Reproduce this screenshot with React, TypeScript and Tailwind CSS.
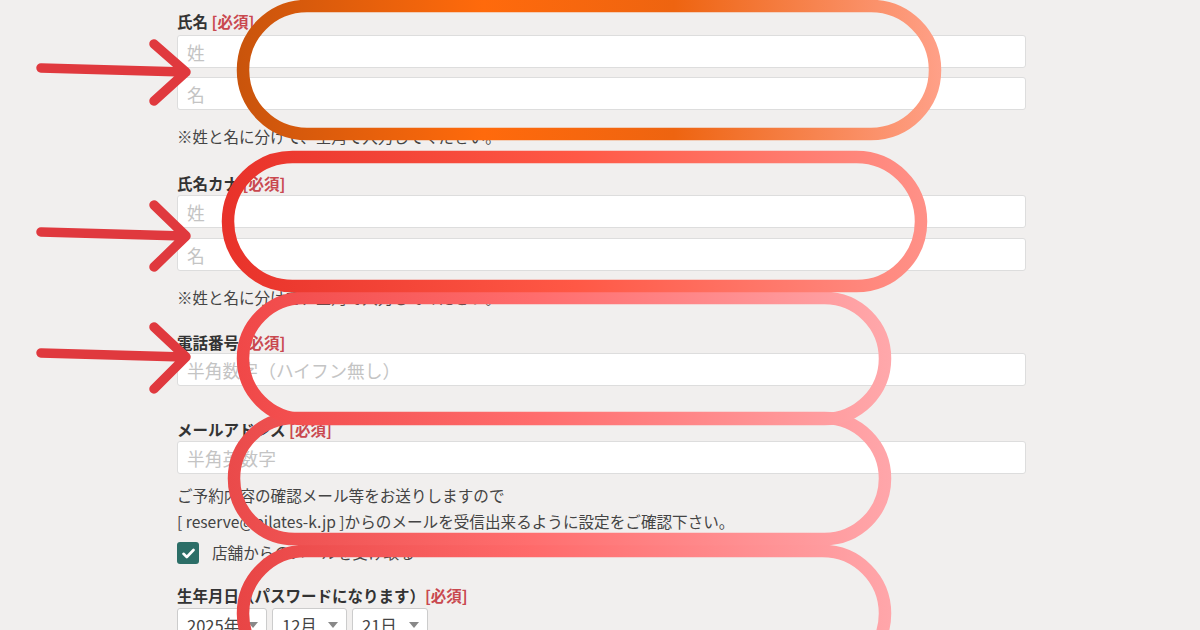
import React from "react";

const FONT = { fontFamily: '"Noto Sans CJK JP", "Noto Sans", sans-serif' };

function Label({ text, className = "" }: { text: string; className?: string }) {
  return (
    <div className={`text-[15.5px] leading-[22px] font-bold text-[#333333] ${className}`}>
      {text} <span className="text-[#c9484f]">[必須]</span>
    </div>
  );
}

function Field({ placeholder, className = "" }: { placeholder: string; className?: string }) {
  return (
    <input
      readOnly
      placeholder={placeholder}
      className={`block w-full h-[33px] bg-white border border-[#dddddd] rounded-[3px] px-[9px] text-[17.8px] placeholder:text-[#c4c4c4] outline-none ${className}`}
    />
  );
}

function Select({ value, width }: { value: string; width: string }) {
  return (
    <div className={`${width} h-[34px] bg-white border border-[#cccccc] rounded-[3px] flex items-center justify-between pl-[9px] pr-[8px] text-[16.5px] text-[#444444]`}>
      <span>{value}</span>
      <span className="w-0 h-0 border-l-[5px] border-r-[5px] border-t-[6px] border-l-transparent border-r-transparent border-t-[#888888]" />
    </div>
  );
}

type Oval = { x: number; y: number; w: number; h: number; id: string; stops: [number, string][] };

const ovals: Oval[] = [
  { id: "g5", x: 243, y: 551, w: 642, h: 125, stops: [[0, "#e84545"], [0.45, "#ff6a6a"], [1, "#ffa6aa"]] },
  { id: "g4", x: 234, y: 418, w: 651, h: 121, stops: [[0, "#ea4a4a"], [0.45, "#ff6e6e"], [1, "#ffa6aa"]] },
  { id: "g3", x: 243, y: 298, w: 642, h: 121, stops: [[0, "#f04848"], [0.45, "#ff6c6c"], [1, "#ffa8ab"]] },
  { id: "g2", x: 228, y: 157, w: 693, h: 129, stops: [[0, "#e8322a"], [0.5, "#ff5845"], [1, "#ff9188"]] },
  { id: "g1", x: 243, y: 6, w: 692, h: 128, stops: [[0, "#c9540c"], [0.35, "#ff6a0c"], [0.62, "#ee6410"], [1, "#ffa088"]] },
];

export default function App() {
  return (
    <div className="relative w-[1200px] h-[630px] overflow-hidden bg-[#f1efee]" style={FONT}>
      <div className="w-[1026px] pl-[177px] pt-[10px] flex flex-col">
        <Label text="氏名" />
        <Field placeholder="姓" className="mt-[3px]" />
        <Field placeholder="名" className="mt-[9px]" />
        <div className="mt-[15px] text-[15.5px] leading-[22px] text-[#444444]">※姓と名に分けて、全角で入力してください。</div>

        <Label text="氏名カナ" className="mt-[25px]" />
        <Field placeholder="姓" className="mt-[1px]" />
        <Field placeholder="名" className="mt-[10px]" />
        <div className="mt-[15px] text-[15.5px] leading-[22px] text-[#444444]">※姓と名に分けて、全角で入力してください。</div>

        <Label text="電話番号" className="mt-[23px]" />
        <Field placeholder="半角数字（ハイフン無し）" />

        <Label text="メールアドレス" className="mt-[32px]" />
        <Field placeholder="半角英数字" className="mt-[1px]" />
        <div className="mt-[8px] text-[15.6px] leading-[26px] text-[#444444]">
          <div>ご予約内容の確認メール等をお送りしますので</div>
          <div>[ reserve@pilates-k.jp ]からのメールを受信出来るように設定をご確認下さい。</div>
        </div>
        <div className="mt-[8px] flex items-center gap-[13px] h-[22px]">
          <div className="w-[22px] h-[22px] rounded-[3px] bg-[#2c6e67] flex items-center justify-center">
            <svg width="13" height="11" viewBox="0 0 13 11">
              <path d="M1.5 5.8 L4.8 9 L11.5 2" stroke="#ffffff" strokeWidth="2.6" fill="none" strokeLinecap="round" strokeLinejoin="round" />
            </svg>
          </div>
          <span className="text-[15.6px] text-[#444444]">店舗からのメールを受け取る</span>
        </div>

        <div className="mt-[20px] text-[15.5px] leading-[22px] font-bold text-[#333333]">
          生年月日（パスワードになります）<span className="text-[#c9484f]">[必須]</span>
        </div>
        <div className="mt-[2px] flex gap-[5px]">
          <Select value="2025年" width="w-[90px]" />
          <Select value="12月" width="w-[75px]" />
          <Select value="21日" width="w-[76px]" />
        </div>
      </div>

      <svg className="absolute inset-0 pointer-events-none" width="1200" height="630" viewBox="0 0 1200 630">
        <defs>
          {ovals.map((o) => (
            <linearGradient key={o.id} id={o.id} gradientUnits="userSpaceOnUse" x1={o.x - 6} y1="0" x2={o.x + o.w + 6} y2="0">
              {o.stops.map(([off, c], i) => (
                <stop key={i} offset={off} stopColor={c} />
              ))}
            </linearGradient>
          ))}
        </defs>
        {ovals.map((o) => (
          <rect key={o.id} x={o.x} y={o.y} width={o.w} height={o.h} rx={o.h / 2} ry={o.h / 2} fill="none" stroke={`url(#${o.id})`} strokeWidth="12.5" />
        ))}
        <g stroke="#e0393e" strokeWidth="9.5" fill="none" strokeLinecap="round" strokeLinejoin="round">
          <path d="M41 68 L185 72 M154 44 L186 72 L154 101" />
          <path d="M41 232 L184 236 M154 205 L186 236 L154 267" />
          <path d="M41 353 L184 357 M154 327 L186 357 L154 389" />
        </g>
      </svg>
    </div>
  );
}
